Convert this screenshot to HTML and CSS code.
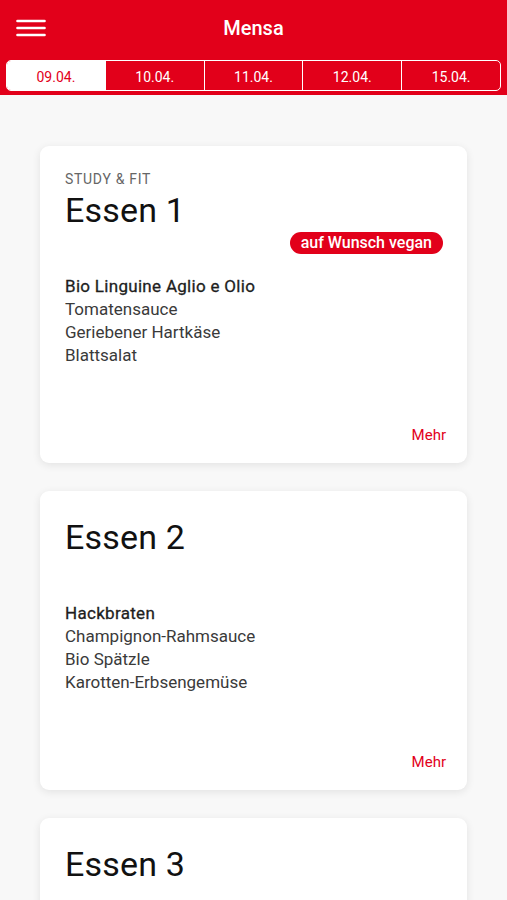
FILE: index.html
```html
<html>
<head>
<title>Mensa</title>
<link rel="stylesheet" href="styles.css">
</head>
<body>

<div id="header">
	<div class="topbar">
		<div class="menu">
			<svg width="30" height="18" viewBox="0 0 30 18"><g stroke="#fff" stroke-width="2.6" stroke-linecap="round"><line x1="1.5" y1="2" x2="28.5" y2="2"/><line x1="1.5" y1="9" x2="28.5" y2="9"/><line x1="1.5" y1="16" x2="28.5" y2="16"/></g></svg>
		</div>
		<div class="title">Mensa</div>
		<div class="menu"></div>
	</div>
	<div class="tabs">
		<div class="tab active">09.04.</div>
		<div class="tab">10.04.</div>
		<div class="tab">11.04.</div>
		<div class="tab">12.04.</div>
		<div class="tab">15.04.</div>
	</div>
</div>

<div id="list">
	<div class="card">
		<div class="category">Study &amp; Fit</div>
		<div class="name">Essen 1</div>
		<div class="badges"><span class="badge">auf Wunsch vegan</span></div>
		<div class="dishes">
			<div class="main">Bio Linguine Aglio e Olio</div>
			<div>Tomatensauce</div>
			<div>Geriebener Hartkäse</div>
			<div>Blattsalat</div>
		</div>
		<div class="more">Mehr</div>
	</div>

	<div class="card">
		<div class="name">Essen 2</div>
		<div class="badges"></div>
		<div class="dishes">
			<div class="main">Hackbraten</div>
			<div>Champignon-Rahmsauce</div>
			<div>Bio Spätzle</div>
			<div>Karotten-Erbsengemüse</div>
		</div>
		<div class="more">Mehr</div>
	</div>

	<div class="card">
		<div class="name">Essen 3</div>
		<div class="badges"></div>
		<div class="dishes">
			<div class="main">&nbsp;</div>
		</div>
	</div>
</div>

</body>
</html>
```
FILE: styles.css
```css
html, body {
	background-color: #f8f8f8;
	padding: 0px;
	margin: 0px;
	font-family: Roboto, "Liberation Sans", sans-serif;
	overflow: hidden;
}
#header {
	background-color: #e2001a;
	height: 95px;
	box-sizing: border-box;
	padding: 0 6px;
}
.topbar {
	height: 60px;
	display: flex;
	align-items: center;
	justify-content: space-between;
	padding-bottom: 4px;
	box-sizing: border-box;
}
.menu {
	width: 30px;
	padding-left: 10px;
	display: flex;
	align-items: center;
}
.title {
	color: white;
	font-size: 20px;
	font-weight: 500;
}
.tabs {
	display: flex;
	height: 31px;
	border: 1px solid #fff;
	border-radius: 5px;
	overflow: hidden;
	box-sizing: border-box;
}
.tab {
	flex: 1;
	display: flex;
	align-items: center;
	justify-content: center;
	color: white;
	font-size: 14px;
	padding-top: 2px;
	border-left: 1px solid #fff;
}
.tab:first-child {
	border-left: none;
}
.tab.active {
	background-color: #fff;
	color: #e2001a;
}
#list {
	padding: 51px 40px 0 40px;
	display: flex;
	flex-direction: column;
	gap: 28px;
}
.card {
	background-color: #fff;
	border-radius: 9px;
	box-shadow: 0 2px 8px rgba(0,0,0,0.09);
	padding: 24px 21px 18px 25px;
}
.category {
	font-size: 14px;
	line-height: 18px;
	color: #666;
	text-transform: uppercase;
	letter-spacing: 0.7px;
}
.name {
	font-size: 34px;
	line-height: 40px;
	color: #111;
	margin-top: 2px;
	letter-spacing: 0.2px;
}
.badges {
	height: 22px;
	margin-top: 2px;
	display: flex;
	justify-content: flex-end;
	padding-right: 3px;
}
.badge {
	background-color: #e2001a;
	color: #fff;
	font-size: 16px;
	font-weight: 500;
	line-height: 22px;
	padding: 0 11px;
	border-radius: 11px;
}
.dishes {
	margin-top: 21px;
	font-size: 17px;
	line-height: 23px;
	color: #3a3a3a;
}
.dishes .main {
	color: #1e1e1e;
	letter-spacing: 0.3px;
	-webkit-text-stroke: 0.3px #1e1e1e;
}
.more {
	margin-top: 58px;
	text-align: right;
	color: #e2001a;
	font-size: 15px;
	line-height: 20px;
}
```
